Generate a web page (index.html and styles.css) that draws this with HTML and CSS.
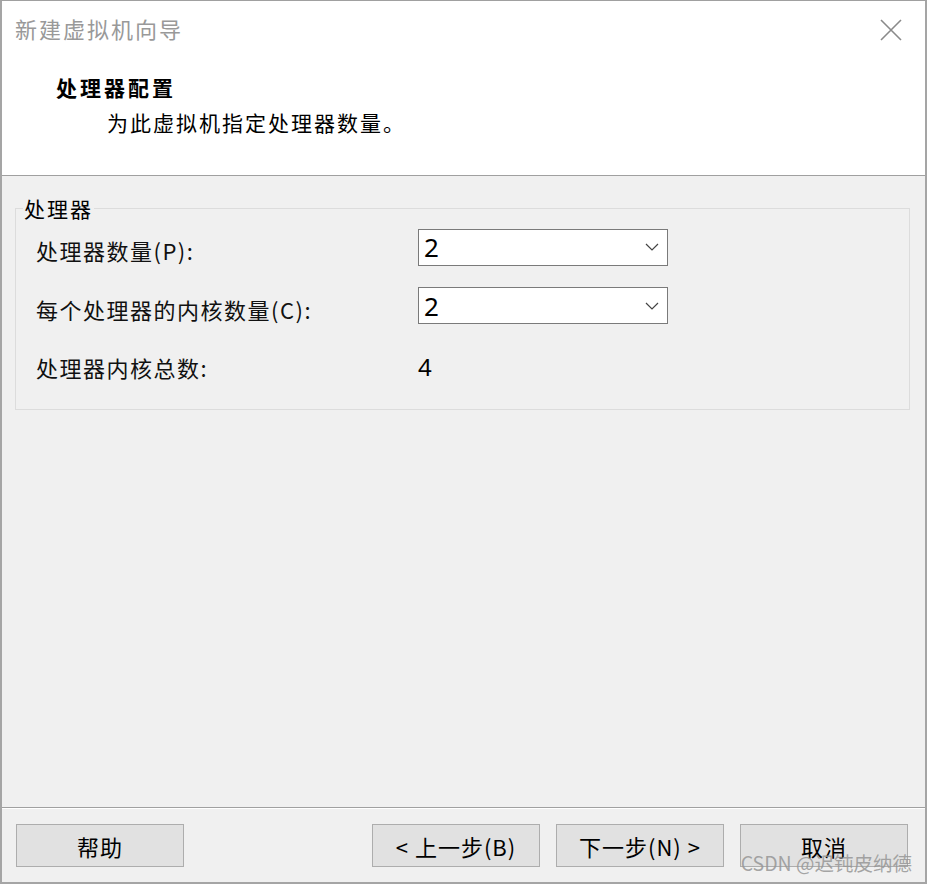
FILE: index.html
```html
<!DOCTYPE html>
<html lang="zh-CN">
<head>
<meta charset="utf-8">
<title>新建虚拟机向导</title>
<link rel="stylesheet" href="styles.css">
</head>
<body>
<div class="window">
  <div class="titlebar">
    <span class="title">新建虚拟机向导</span>
    <svg class="close" width="24" height="24" viewBox="0 0 24 24"><path d="M2 2L22 22M22 2L2 22" stroke="#8a8a8a" stroke-width="1.6" fill="none"/></svg>
  </div>
  <div class="header">
    <div class="h-title">处理器配置</div>
    <div class="h-sub">为此虚拟机指定处理器数量。</div>
  </div>
  <div class="body">
    <fieldset class="group">
      <legend>处理器</legend>
      <div class="row">
        <span class="label">处理器数量(P):</span>
        <div class="select"><span class="val">2</span><svg class="chev" width="14" height="8" viewBox="0 0 14 8"><path d="M1 1L7 7L13 1" stroke="#444" stroke-width="1.2" fill="none"/></svg></div>
      </div>
      <div class="row">
        <span class="label">每个处理器的内核数量(C):</span>
        <div class="select"><span class="val">2</span><svg class="chev" width="14" height="8" viewBox="0 0 14 8"><path d="M1 1L7 7L13 1" stroke="#444" stroke-width="1.2" fill="none"/></svg></div>
      </div>
      <div class="row">
        <span class="label">处理器内核总数:</span>
        <span class="total">4</span>
      </div>
    </fieldset>
  </div>
  <div class="footer">
    <button class="btn">帮助</button>
    <div class="spacer"></div>
    <button class="btn">&lt; 上一步(B)</button>
    <button class="btn">下一步(N) &gt;</button>
    <button class="btn">取消</button>
  </div>
  <div class="watermark">CSDN @迟钝皮纳德</div>
</div>
</body>
</html>
```
FILE: styles.css
```css
html, body {
  margin: 0;
  padding: 0;
  background: #f0f0f0;
}
body {
  font-family: "Noto Sans CJK SC", "Noto Sans", sans-serif;
  width: 927px;
  height: 884px;
  overflow: hidden;
}
.window {
  position: relative;
  box-sizing: border-box;
  width: 927px;
  height: 884px;
  border-top: 1px solid #a0a0a0;
  border-left: 2px solid #a5a5a5;
  border-right: 2px solid #a5a5a5;
  border-bottom: 2px solid #a5a5a5;
  display: flex;
  flex-direction: column;
  background: #f0f0f0;
}
.titlebar {
  height: 59px;
  background: #fff;
  display: flex;
  align-items: center;
  justify-content: space-between;
  padding: 0 22px 0 13px;
}
.title {
  font-size: 22px;
  letter-spacing: 2px;
  color: #999;
  margin-top: -6px;
}
.close {
  margin-top: -2px;
}
.header {
  height: 116px;
  background: #fff;
  border-bottom: 1px solid #a0a0a0;
  box-sizing: border-box;
  padding-top: 12px;
}
.h-title {
  font-size: 21px;
  letter-spacing: 3px;
  font-weight: bold;
  color: #000;
  margin-left: 54px;
  line-height: 30px;
}
.h-sub {
  font-size: 21px;
  letter-spacing: 2px;
  color: #000;
  margin-left: 105px;
  margin-top: 5px;
  line-height: 30px;
}
.body {
  flex: 1;
  padding: 19px 15px 0 13px;
  border-bottom: 1px solid #a0a0a0;
  box-shadow: 0 1px 0 #fff;
}
.group {
  margin: 0;
  border: 1px solid #dcdcdc;
  padding: 0 0 0 20px;
  height: 215px;
  box-sizing: border-box;
}
.group legend {
  font-size: 21px;
  letter-spacing: 2px;
  color: #000;
  padding: 0 1px;
  margin-left: -13px;
  line-height: 26px;
}
.row {
  display: flex;
  align-items: center;
  height: 58.5px;
}
.label {
  width: 382px;
  font-size: 22px;
  letter-spacing: 1.5px;
  color: #111;
}
.select {
  box-sizing: border-box;
  width: 250px;
  height: 37px;
  margin-top: -6px;
  border: 1px solid #7a7a7a;
  background: #fff;
  display: flex;
  align-items: center;
  justify-content: space-between;
  padding: 0 8px 0 5px;
}
.val, .total {
  font-size: 26px;
  color: #000;
  font-family: "Noto Sans", "Noto Sans CJK SC", sans-serif;
  line-height: 30px;
}
.total {
  font-size: 24px;
}
.footer {
  height: 74px;
  display: flex;
  align-items: flex-start;
  padding: 16px 17px 0 14px;
  gap: 16px;
  box-sizing: border-box;
}
.spacer {
  flex: 1;
}
.btn {
  width: 168px;
  height: 43px;
  background: #e1e1e1;
  border: 1px solid #adadad;
  font-family: "Noto Sans CJK SC", "Noto Sans", sans-serif;
  font-size: 22px;
  letter-spacing: 1px;
  color: #000;
  padding: 0;
  margin: 0;
}
.watermark {
  position: absolute;
  right: 13px;
  bottom: 5px;
  font-size: 19.5px;
  color: rgba(150, 150, 150, 0.85);
  pointer-events: none;
}
```
